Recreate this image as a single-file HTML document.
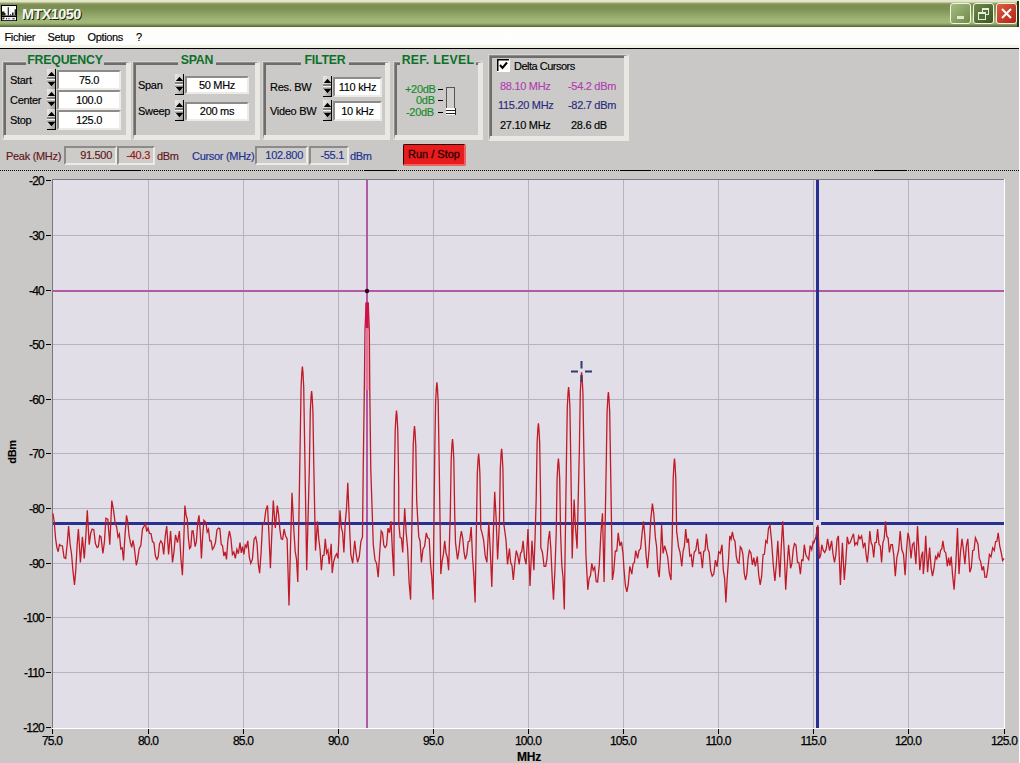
<!DOCTYPE html>
<html><head><meta charset="utf-8"><style>
html,body{margin:0;padding:0}
body{width:1020px;height:763px;overflow:hidden;position:relative;background:#c9c8c6;font-family:"Liberation Sans", sans-serif;font-size:11px;color:#000}
div,svg{position:absolute}
.frm{border-style:solid;border-width:3px 4px 4px 3px;border-color:#777 #ecebe6 #ecebe6 #777;background:#cbcac8;box-shadow:-1px -1px 0 #b0afad}
.gt{font-weight:bold;font-size:12.3px;color:#0b7028;background:#c9c8c6;height:11px;line-height:13px;text-align:center;letter-spacing:-0.2px}
.tb{background:#fff;border-style:solid;border-width:2px;border-color:#8c8b88 #ecebe6 #ecebe6 #8c8b88;font-size:11px;white-space:nowrap;letter-spacing:-0.3px;-webkit-text-stroke:0.15px currentColor}
.lb{white-space:nowrap;line-height:12px;letter-spacing:-0.3px;-webkit-text-stroke:0.15px currentColor}
.sp{}
</style></head><body>

<div style="left:0;top:0;width:1019px;height:27px;background:linear-gradient(#e6e8cc 0px,#e0e4c4 2px,#9aa672 3px,#7b8d52 5px,#7f9256 9px,#8ea266 14px,#9db474 19px,#a2b87a 23px,#7d9256 25px,#4e5e34 27px)"></div>
<div style="left:1017px;top:1px;width:2px;height:26px;background:#2c3418"></div>
<div style="left:1019px;top:0;width:1px;height:763px;background:#fff"></div>
<svg style="left:1px;top:5px" width="16" height="16" viewBox="0 0 16 16">
<rect x="0" y="0" width="16" height="16" fill="#000"/>
<rect x="1" y="1" width="14" height="9.5" fill="#fff"/>
<path d="M1,10.5 V6.5 H3.5 V8 H4.5 V10.5 Z M6.7,10.5 V2.2 H7.9 V10.5 Z M9,10.5 V9.2 H10.2 V10.5 Z M11,10.5 V7.4 H12.6 V10.5 Z M13.6,10.5 V4.3 H15 V10.5 Z" fill="#1a2418"/>
<rect x="1" y="12" width="14" height="3.2" fill="#f2f0f4"/>
<path d="M2,14.6 V13 H3.5 M5,13.8 H6 M7.5,13.8 H8.5 M11.5,13.8 H13.5" stroke="#000" stroke-width="1.1" fill="none"/>
</svg>
<div style="left:22px;top:6px;font-size:14.5px;font-weight:bold;color:#f4f8ec;letter-spacing:-0.6px;line-height:17px;text-shadow:1px 1px 0 #1a220e;transform:skewX(-3deg)">MTX1050</div>
<div style="left:950px;top:3px;width:19px;height:19px;border:1px solid #f2f4e0;border-radius:3px;background:linear-gradient(135deg,#a6bc82,#6e8a4a)"><div style="left:6px;top:12px;width:7px;height:3px;background:#dfe8c8"></div></div>
<div style="left:973px;top:3px;width:19px;height:19px;border:1px solid #f2f4e0;border-radius:3px;background:linear-gradient(135deg,#6f8a4c,#3c5424)"><div style="left:8px;top:4px;width:5px;height:4px;border:1px solid #e6eed6;border-top-width:2px"></div><div style="left:4px;top:8px;width:6px;height:5px;border:1px solid #e6eed6;border-top-width:2px;background:#556e38"></div></div>
<div style="left:996px;top:3px;width:19px;height:19px;border:1px solid #f2f4e0;border-radius:3px;background:linear-gradient(135deg,#e05a40,#b02418)"><svg style="left:3px;top:3px" width="13" height="13"><path d="M2,2 L11,11 M11,2 L2,11" stroke="#fff" stroke-width="2"/></svg></div>
<div style="left:0;top:27px;width:1019px;height:21px;background:linear-gradient(#fdfdfb 0,#fefefc 17px,#f2f1e6 19px,#f4f3ea 21px)"></div>
<div style="left:0;top:48px;width:1019px;height:1px;background:#000"></div>
<div class="lb" style="left:4.5px;top:31px;font-size:11px;line-height:12px;letter-spacing:-0.35px">Fichier</div>
<div class="lb" style="left:47.5px;top:31px;font-size:11px;line-height:12px;letter-spacing:-0.35px">Setup</div>
<div class="lb" style="left:87.5px;top:31px;font-size:11px;line-height:12px;letter-spacing:-0.35px">Options</div>
<div class="lb" style="left:136px;top:31px;font-size:11px;line-height:12px;letter-spacing:-0.35px">?</div>
<div style="left:2px;top:61px;width:128px;height:78px;border-style:solid;border-width:1px 0 0 1px;border-color:#d6d5d2;"></div><div style="left:3px;top:62px;width:122px;height:72px;border-style:solid;border-width:1px 5px 5px 1px;border-color:#8e8d8a #e9e8e3 #e9e8e3 #8e8d8a;background:#cbcac8"></div><div style="left:4px;top:63px;width:120px;height:70px;border-style:solid;border-width:2px 0 0 2px;border-color:#6e6d6b;background:#cbcac8"></div>
<div style="left:132px;top:61px;width:127px;height:78px;border-style:solid;border-width:1px 0 0 1px;border-color:#d6d5d2;"></div><div style="left:133px;top:62px;width:121px;height:72px;border-style:solid;border-width:1px 5px 5px 1px;border-color:#8e8d8a #e9e8e3 #e9e8e3 #8e8d8a;background:#cbcac8"></div><div style="left:134px;top:63px;width:119px;height:70px;border-style:solid;border-width:2px 0 0 2px;border-color:#6e6d6b;background:#cbcac8"></div>
<div style="left:262px;top:61px;width:127px;height:78px;border-style:solid;border-width:1px 0 0 1px;border-color:#d6d5d2;"></div><div style="left:263px;top:62px;width:121px;height:72px;border-style:solid;border-width:1px 5px 5px 1px;border-color:#8e8d8a #e9e8e3 #e9e8e3 #8e8d8a;background:#cbcac8"></div><div style="left:264px;top:63px;width:119px;height:70px;border-style:solid;border-width:2px 0 0 2px;border-color:#6e6d6b;background:#cbcac8"></div>
<div style="left:393px;top:61px;width:89px;height:78px;border-style:solid;border-width:1px 0 0 1px;border-color:#d6d5d2;"></div><div style="left:394px;top:62px;width:83px;height:72px;border-style:solid;border-width:1px 5px 5px 1px;border-color:#8e8d8a #e9e8e3 #e9e8e3 #8e8d8a;background:#cbcac8"></div><div style="left:395px;top:63px;width:81px;height:70px;border-style:solid;border-width:2px 0 0 2px;border-color:#6e6d6b;background:#cbcac8"></div>
<div style="left:488px;top:54px;width:140px;height:86px;border-style:solid;border-width:1px 0 0 1px;border-color:#d6d5d2;"></div><div style="left:489px;top:55px;width:134px;height:80px;border-style:solid;border-width:1px 5px 5px 1px;border-color:#8e8d8a #e9e8e3 #e9e8e3 #8e8d8a;background:#cbcac8"></div><div style="left:490px;top:56px;width:132px;height:78px;border-style:solid;border-width:2px 0 0 2px;border-color:#6e6d6b;background:#cbcac8"></div>
<div class="gt" style="left:26px;top:54px;width:78px">FREQUENCY</div>
<div class="gt" style="left:178px;top:54px;width:38px">SPAN</div>
<div class="gt" style="left:301px;top:54px;width:48px">FILTER</div>
<div class="gt" style="left:400px;top:54px;width:76px;letter-spacing:0.3px">REF. LEVEL</div>
<div class="lb" style="left:10px;top:74px;color:#000;font-size:11px;">Start</div>
<svg class="sp" style="left:47px;top:69px" width="9" height="21" viewBox="0 0 9 21">
<defs><linearGradient id="sg47_69" x1="0" y1="0" x2="1" y2="1"><stop offset="0" stop-color="#ecebe8"/><stop offset="0.55" stop-color="#c8c7c4"/><stop offset="1" stop-color="#8c8b88"/></linearGradient></defs>
<rect x="0" y="0" width="9" height="21" fill="url(#sg47_69)"/>
<path d="M0.8,7 L4.5,2.8 L8.2,7 Z" fill="#000"/>
<rect x="0" y="8.6" width="8" height="1.1" fill="#111"/>
<rect x="0" y="9.7" width="8" height="2" fill="#f6f6f2"/>
<rect x="0" y="11.7" width="8" height="0.8" fill="#555"/>
<path d="M0.8,13 L4.5,17.2 L8.2,13 Z" fill="#000"/>
<rect x="0" y="20" width="9" height="1" fill="#000"/>
<rect x="8" y="0" width="1" height="21" fill="#000"/>
</svg>
<div class="tb" style="left:57px;top:70px;width:60px;height:16px;line-height:16px;text-align:center;padding-right:0px;">75.0</div>
<div class="lb" style="left:10px;top:94px;color:#000;font-size:11px;">Center</div>
<svg class="sp" style="left:47px;top:89px" width="9" height="21" viewBox="0 0 9 21">
<defs><linearGradient id="sg47_89" x1="0" y1="0" x2="1" y2="1"><stop offset="0" stop-color="#ecebe8"/><stop offset="0.55" stop-color="#c8c7c4"/><stop offset="1" stop-color="#8c8b88"/></linearGradient></defs>
<rect x="0" y="0" width="9" height="21" fill="url(#sg47_89)"/>
<path d="M0.8,7 L4.5,2.8 L8.2,7 Z" fill="#000"/>
<rect x="0" y="8.6" width="8" height="1.1" fill="#111"/>
<rect x="0" y="9.7" width="8" height="2" fill="#f6f6f2"/>
<rect x="0" y="11.7" width="8" height="0.8" fill="#555"/>
<path d="M0.8,13 L4.5,17.2 L8.2,13 Z" fill="#000"/>
<rect x="0" y="20" width="9" height="1" fill="#000"/>
<rect x="8" y="0" width="1" height="21" fill="#000"/>
</svg>
<div class="tb" style="left:57px;top:90px;width:60px;height:16px;line-height:16px;text-align:center;padding-right:0px;">100.0</div>
<div class="lb" style="left:10px;top:114px;color:#000;font-size:11px;">Stop</div>
<svg class="sp" style="left:47px;top:109px" width="9" height="21" viewBox="0 0 9 21">
<defs><linearGradient id="sg47_109" x1="0" y1="0" x2="1" y2="1"><stop offset="0" stop-color="#ecebe8"/><stop offset="0.55" stop-color="#c8c7c4"/><stop offset="1" stop-color="#8c8b88"/></linearGradient></defs>
<rect x="0" y="0" width="9" height="21" fill="url(#sg47_109)"/>
<path d="M0.8,7 L4.5,2.8 L8.2,7 Z" fill="#000"/>
<rect x="0" y="8.6" width="8" height="1.1" fill="#111"/>
<rect x="0" y="9.7" width="8" height="2" fill="#f6f6f2"/>
<rect x="0" y="11.7" width="8" height="0.8" fill="#555"/>
<path d="M0.8,13 L4.5,17.2 L8.2,13 Z" fill="#000"/>
<rect x="0" y="20" width="9" height="1" fill="#000"/>
<rect x="8" y="0" width="1" height="21" fill="#000"/>
</svg>
<div class="tb" style="left:57px;top:110px;width:60px;height:16px;line-height:16px;text-align:center;padding-right:0px;">125.0</div>
<div class="lb" style="left:138px;top:79px;color:#000;font-size:11px;">Span</div>
<svg class="sp" style="left:175px;top:74px" width="9" height="21" viewBox="0 0 9 21">
<defs><linearGradient id="sg175_74" x1="0" y1="0" x2="1" y2="1"><stop offset="0" stop-color="#ecebe8"/><stop offset="0.55" stop-color="#c8c7c4"/><stop offset="1" stop-color="#8c8b88"/></linearGradient></defs>
<rect x="0" y="0" width="9" height="21" fill="url(#sg175_74)"/>
<path d="M0.8,7 L4.5,2.8 L8.2,7 Z" fill="#000"/>
<rect x="0" y="8.6" width="8" height="1.1" fill="#111"/>
<rect x="0" y="9.7" width="8" height="2" fill="#f6f6f2"/>
<rect x="0" y="11.7" width="8" height="0.8" fill="#555"/>
<path d="M0.8,13 L4.5,17.2 L8.2,13 Z" fill="#000"/>
<rect x="0" y="20" width="9" height="1" fill="#000"/>
<rect x="8" y="0" width="1" height="21" fill="#000"/>
</svg>
<div class="tb" style="left:185px;top:76px;width:60px;height:14px;line-height:14px;text-align:center;padding-right:0px;">50 MHz</div>
<div class="lb" style="left:138px;top:105px;color:#000;font-size:11px;">Sweep</div>
<svg class="sp" style="left:175px;top:100px" width="9" height="21" viewBox="0 0 9 21">
<defs><linearGradient id="sg175_100" x1="0" y1="0" x2="1" y2="1"><stop offset="0" stop-color="#ecebe8"/><stop offset="0.55" stop-color="#c8c7c4"/><stop offset="1" stop-color="#8c8b88"/></linearGradient></defs>
<rect x="0" y="0" width="9" height="21" fill="url(#sg175_100)"/>
<path d="M0.8,7 L4.5,2.8 L8.2,7 Z" fill="#000"/>
<rect x="0" y="8.6" width="8" height="1.1" fill="#111"/>
<rect x="0" y="9.7" width="8" height="2" fill="#f6f6f2"/>
<rect x="0" y="11.7" width="8" height="0.8" fill="#555"/>
<path d="M0.8,13 L4.5,17.2 L8.2,13 Z" fill="#000"/>
<rect x="0" y="20" width="9" height="1" fill="#000"/>
<rect x="8" y="0" width="1" height="21" fill="#000"/>
</svg>
<div class="tb" style="left:185px;top:102px;width:60px;height:15px;line-height:15px;text-align:center;padding-right:0px;">200 ms</div>
<div class="lb" style="left:270px;top:81px;color:#000;font-size:11px;">Res. BW</div>
<svg class="sp" style="left:323px;top:76px" width="9" height="21" viewBox="0 0 9 21">
<defs><linearGradient id="sg323_76" x1="0" y1="0" x2="1" y2="1"><stop offset="0" stop-color="#ecebe8"/><stop offset="0.55" stop-color="#c8c7c4"/><stop offset="1" stop-color="#8c8b88"/></linearGradient></defs>
<rect x="0" y="0" width="9" height="21" fill="url(#sg323_76)"/>
<path d="M0.8,7 L4.5,2.8 L8.2,7 Z" fill="#000"/>
<rect x="0" y="8.6" width="8" height="1.1" fill="#111"/>
<rect x="0" y="9.7" width="8" height="2" fill="#f6f6f2"/>
<rect x="0" y="11.7" width="8" height="0.8" fill="#555"/>
<path d="M0.8,13 L4.5,17.2 L8.2,13 Z" fill="#000"/>
<rect x="0" y="20" width="9" height="1" fill="#000"/>
<rect x="8" y="0" width="1" height="21" fill="#000"/>
</svg>
<div class="tb" style="left:333px;top:77px;width:45px;height:16px;line-height:16px;text-align:center;padding-right:0px;">110 kHz</div>
<div class="lb" style="left:270px;top:105px;color:#000;font-size:11px;">Video BW</div>
<svg class="sp" style="left:323px;top:100px" width="9" height="21" viewBox="0 0 9 21">
<defs><linearGradient id="sg323_100" x1="0" y1="0" x2="1" y2="1"><stop offset="0" stop-color="#ecebe8"/><stop offset="0.55" stop-color="#c8c7c4"/><stop offset="1" stop-color="#8c8b88"/></linearGradient></defs>
<rect x="0" y="0" width="9" height="21" fill="url(#sg323_100)"/>
<path d="M0.8,7 L4.5,2.8 L8.2,7 Z" fill="#000"/>
<rect x="0" y="8.6" width="8" height="1.1" fill="#111"/>
<rect x="0" y="9.7" width="8" height="2" fill="#f6f6f2"/>
<rect x="0" y="11.7" width="8" height="0.8" fill="#555"/>
<path d="M0.8,13 L4.5,17.2 L8.2,13 Z" fill="#000"/>
<rect x="0" y="20" width="9" height="1" fill="#000"/>
<rect x="8" y="0" width="1" height="21" fill="#000"/>
</svg>
<div class="tb" style="left:333px;top:101px;width:45px;height:16px;line-height:16px;text-align:center;padding-right:0px;">10 kHz</div>
<div class="lb" style="left:405px;top:83px;color:#158a28;font-size:11px;letter-spacing:-0.3px">+20dB</div>
<div class="lb" style="left:416px;top:94px;color:#158a28;font-size:11px;letter-spacing:-0.3px">0dB</div>
<div class="lb" style="left:406px;top:106px;color:#158a28;font-size:11px;letter-spacing:-0.3px">-20dB</div>
<svg style="left:437px;top:85px" width="22" height="32">
<path d="M1,4.5 H6 M1,15.5 H6 M1,27.5 H6" stroke="#000" stroke-width="1"/>
<rect x="9.5" y="2.5" width="8" height="21" fill="#d0cfcc" stroke="#555" stroke-width="1"/>
<rect x="9" y="23" width="10" height="7" fill="#fff"/>
<path d="M9,25.5 H18 M9,28.5 H18 M18.5,23 V30" stroke="#222" stroke-width="1"/>
</svg>
<svg style="left:497px;top:59px" width="13" height="13">
<rect x="0" y="0" width="13" height="13" fill="#fff"/>
<path d="M0.5,12 V0.5 H12" stroke="#000" stroke-width="2" fill="none"/>
<path d="M3,6 L5.5,9 L10,3.5" stroke="#000" stroke-width="2" fill="none"/>
</svg>
<div class="lb" style="left:514px;top:60px;color:#000;font-size:11px;letter-spacing:-0.5px">Delta Cursors</div>
<div class="lb" style="left:500px;top:80px;color:#b040b0;font-size:11px;">88.10 MHz</div>
<div class="lb" style="left:568px;top:80px;color:#b040b0;font-size:11px;">-54.2 dBm</div>
<div class="lb" style="left:498px;top:99px;color:#2a2a80;font-size:11px;">115.20 MHz</div>
<div class="lb" style="left:568px;top:99px;color:#2a2a80;font-size:11px;">-82.7 dBm</div>
<div class="lb" style="left:500px;top:119px;color:#000;font-size:11px;">27.10 MHz</div>
<div class="lb" style="left:571px;top:119px;color:#000;font-size:11px;">28.6 dB</div>
<div class="lb" style="left:6px;top:150px;color:#621616;font-size:11px;">Peak (MHz)</div>
<div class="tb" style="left:64px;top:146px;width:49px;height:15px;background:#cdccc9;color:#621616;text-align:right;line-height:15px"><span style="position:relative;right:3px">91.500</span></div>
<div class="tb" style="left:117px;top:146px;width:34px;height:15px;background:#cdccc9;color:#9a1414;text-align:right;line-height:15px"><span style="position:relative;right:3px">-40.3</span></div>
<div class="lb" style="left:157px;top:150px;color:#621616;font-size:11px;">dBm</div>
<div class="lb" style="left:192px;top:150px;color:#1a3090;font-size:11px;">Cursor (MHz)</div>
<div class="tb" style="left:255px;top:146px;width:49px;height:15px;background:#cdccc9;color:#1a3090;text-align:right;line-height:15px"><span style="position:relative;right:3px">102.800</span></div>
<div class="tb" style="left:309px;top:146px;width:36px;height:15px;background:#cdccc9;color:#1a3090;text-align:right;line-height:15px"><span style="position:relative;right:3px">-55.1</span></div>
<div class="lb" style="left:350px;top:150px;color:#1a3090;font-size:11px;">dBm</div>
<div style="left:403px;top:144px;width:60px;height:19px;background:#e81c1c;border-style:solid;border-width:1px 2px 2px 1px;border-color:#300 #f06060 #f06060 #300;border-radius:2px;font-size:11px;line-height:19px;text-align:center;color:#2a0000;font-weight:normal;-webkit-text-stroke:0.3px #2a0000">Run / Stop</div>
<div style="left:0;top:170px;width:1019px;height:1px;background:repeating-linear-gradient(90deg,#000 0 1px,transparent 1px 2px)"></div>
<div style="left:110px;top:170px;width:31px;height:1px;background:#000"></div>
<div style="left:365px;top:170px;width:31px;height:1px;background:#000"></div>
<div style="left:620px;top:170px;width:31px;height:1px;background:#000"></div>
<div style="left:875px;top:170px;width:31px;height:1px;background:#000"></div>
<svg style="left:0;top:0" width="1020" height="763" viewBox="0 0 1020 763">
<rect x="52" y="179" width="953" height="550" fill="#fff"/>
<rect x="52" y="179" width="952" height="549" fill="#7a7880"/>
<rect x="53" y="180" width="951" height="548" fill="#e1dee7"/>
<path d="M148.5,180V728 M243.5,180V728 M338.5,180V728 M433.5,180V728 M528.5,180V728 M623.5,180V728 M718.5,180V728 M813.5,180V728 M908.5,180V728 M53,235.5H1004 M53,290.5H1004 M53,344.5H1004 M53,399.5H1004 M53,453.5H1004 M53,508.5H1004 M53,563.5H1004 M53,617.5H1004 M53,672.5H1004" stroke="#b6b2c0" stroke-width="1" fill="none"/>
<path d="M53,291H1004 M367,180V728" stroke="#b05aa6" stroke-width="2"/>
<path d="M53,523.5H813 M821,523.5H1004 M817.5,180V520 M817.5,527V728" stroke="#283090" stroke-width="3"/>
<path d="M52.9,513.3 54.2,521.7 55.6,538.5 56.9,547.6 58.2,551.7 59.5,544.5 60.8,545.7 62.4,545.8 64.1,557.5 65.7,558.4 67.2,544.0 68.6,526.1 70.1,544.3 71.6,554.5 73.0,571.4 74.5,584.9 75.8,569.9 77.1,545.8 78.4,529.0 80.4,562.4 82.4,536.9 84.3,558.4 85.8,536.4 87.3,510.4 89.2,544.7 90.7,533.2 92.2,529.0 93.8,529.6 95.4,543.6 97.1,547.6 98.4,546.7 99.7,535.8 101.0,536.9 102.9,553.5 104.4,542.1 105.9,518.2 107.8,519.2 109.8,544.7 111.8,500.6 113.7,511.4 115.2,523.6 116.7,527.1 118.0,537.2 119.4,534.0 120.8,548.8 122.2,547.9 123.5,560.4 125.0,534.9 126.5,515.3 127.8,522.2 129.1,535.7 130.4,542.7 131.7,547.4 133.0,540.4 134.3,547.6 136.3,565.3 137.7,559.4 139.2,548.6 140.8,545.5 142.5,528.9 144.1,526.1 145.4,523.4 146.7,531.6 148.0,528.0 149.5,533.5 151.0,533.6 152.5,541.6 153.9,542.7 155.4,556.0 156.9,559.4 158.2,556.8 159.5,543.9 160.8,540.8 162.3,543.2 163.7,554.5 165.2,536.5 166.7,526.1 168.6,554.5 170.6,531.0 172.5,562.4 174.0,551.6 175.5,534.9 177.5,542.7 179.4,531.0 180.9,558.5 182.4,575.1 183.6,545.3 184.9,505.5 186.1,515.1 187.3,519.2 188.4,538.3 189.6,548.6 190.8,546.9 192.0,531.0 193.1,531.0 195.1,546.7 196.4,541.4 197.7,522.8 199.0,515.3 200.2,530.5 201.4,558.4 202.6,537.2 203.9,520.2 205.9,522.2 207.2,532.0 208.5,529.3 209.8,540.8 211.1,540.8 212.4,549.3 213.7,547.6 215.4,542.8 217.0,529.7 218.6,528.0 219.9,528.6 221.2,544.2 222.5,545.7 223.9,556.1 225.2,551.8 226.5,559.4 227.9,540.2 229.4,531.0 230.9,538.3 232.4,554.5 233.8,552.1 235.3,558.4 236.9,549.4 238.4,553.7 240.0,542.7 241.3,552.9 242.6,546.7 243.9,554.5 245.2,545.1 246.5,547.2 247.8,540.8 249.3,557.1 250.8,563.3 252.4,559.2 254.1,539.2 255.7,536.9 257.0,543.3 258.3,564.0 259.6,573.1 261.1,552.5 262.5,525.1 264.2,523.4 265.8,510.4 267.5,505.5 268.9,533.1 270.4,568.2 271.9,532.1 273.3,500.6 275.3,528.0 277.3,505.5 278.6,514.5 279.9,529.5 281.2,538.8 282.6,539.3 284.1,529.0 285.6,536.1 287.1,538.8 289.0,605.5 290.5,546.4 292.0,492.7 293.9,531.0 295.2,551.4 296.5,559.1 297.8,582.0 300.2,441.5 301.1,386.5 301.9,371.5 302.4,366.5 302.9,371.5 303.7,386.5 304.6,441.5 306.7,570.2 309.4,466.0 310.3,411.0 311.1,396.0 311.6,391.0 312.1,396.0 312.9,411.0 313.8,466.0 315.5,550.6 317.5,521.2 318.8,539.4 320.1,550.1 321.4,570.2 322.7,555.5 324.0,555.2 325.3,538.8 326.6,552.9 327.9,550.0 329.2,564.3 331.2,543.7 332.2,573.1 333.6,561.9 335.1,556.5 336.6,553.9 338.0,558.4 340.0,510.4 341.3,527.7 342.6,532.6 343.9,552.5 345.2,523.1 346.5,508.4 347.8,482.9 349.3,521.1 350.8,554.5 352.7,563.3 354.7,540.8 356.2,554.2 357.6,562.4 359.3,556.5 360.9,541.4 362.5,536.9 363.2,470.0 364.3,392.0 365.0,330.0 366.2,303.0 368.2,303.0 369.3,330.0 369.8,392.0 370.8,470.0 373.3,544.7 375.0,559.9 376.6,563.5 378.2,577.1 379.7,552.5 381.2,531.0 382.5,532.9 383.8,545.4 385.1,547.6 386.6,545.4 388.0,528.1 389.5,532.7 391.0,521.2 392.5,552.7 393.9,576.1 394.3,485.6 395.2,430.6 396.0,415.6 396.5,410.6 397.0,415.6 397.8,430.6 398.7,485.6 398.8,523.1 400.1,537.5 401.4,537.9 402.7,552.5 404.7,508.4 406.2,533.0 407.6,548.0 409.1,582.2 410.6,599.6 412.3,501.0 413.2,446.0 414.0,431.0 414.5,426.0 415.0,431.0 415.8,446.0 416.7,501.0 417.5,515.3 418.8,536.9 420.1,541.2 421.4,562.4 423.0,549.1 424.6,546.2 426.3,532.9 427.7,537.9 429.2,538.8 430.5,563.8 431.8,577.5 433.1,599.6 434.7,457.2 435.6,402.2 436.4,387.2 436.9,382.2 437.4,387.2 438.2,402.2 439.1,457.2 440.8,574.1 442.1,561.2 443.4,554.4 444.7,540.8 446.0,552.9 447.3,557.2 448.6,570.2 450.3,514.0 451.2,459.0 452.0,444.0 452.5,439.0 453.0,444.0 453.8,459.0 454.7,514.0 455.5,542.7 457.5,559.4 458.8,551.7 460.1,539.0 461.4,531.0 462.7,538.2 464.0,551.9 465.3,559.4 466.8,554.6 468.2,541.6 469.7,541.0 471.2,527.1 472.5,556.8 473.8,575.1 475.1,602.5 476.4,528.7 477.3,473.7 478.1,458.7 478.6,453.7 479.1,458.7 479.9,473.7 480.8,528.7 482.0,532.9 483.6,540.0 485.2,555.8 486.9,562.4 488.8,522.2 490.3,551.2 491.8,586.9 493.2,537.2 494.7,491.8 496.2,519.8 497.6,559.4 499.4,523.8 500.3,468.8 501.1,453.8 501.6,448.8 502.1,453.8 502.9,468.8 503.8,523.8 504.5,529.0 506.0,540.2 507.5,564.3 509.4,548.6 510.7,562.9 512.0,565.6 513.3,580.0 514.8,563.4 516.3,550.6 517.7,555.4 519.2,564.3 520.5,553.3 521.8,551.5 523.1,540.8 524.6,558.2 526.1,564.3 528.0,529.0 530.0,585.9 532.0,540.8 533.9,570.2 535.1,536.6 536.2,498.3 537.1,443.3 537.9,428.3 538.4,423.3 538.9,428.3 539.7,443.3 540.6,498.3 540.8,547.6 542.4,552.2 544.1,566.3 545.7,566.3 547.0,558.7 548.3,540.5 549.6,531.0 550.9,549.6 552.2,578.4 553.5,599.6 554.9,570.7 556.2,533.6 557.1,478.6 557.9,463.6 558.4,458.6 558.9,463.6 559.7,478.6 560.6,533.6 561.8,565.3 563.1,578.3 564.3,609.4 566.4,462.0 567.3,407.0 568.1,392.0 568.6,387.0 569.1,392.0 569.9,407.0 570.8,462.0 572.2,558.4 574.1,499.6 575.6,529.1 577.1,548.6 579.4,447.4 580.3,392.4 581.1,377.4 581.6,372.4 582.1,377.4 582.9,392.4 583.8,447.4 585.9,554.5 587.8,589.8 589.2,578.2 590.5,575.5 591.8,563.3 593.2,570.3 594.7,567.3 596.2,581.5 597.6,582.0 599.3,564.5 600.9,533.1 602.5,513.3 604.1,582.0 606.2,467.0 607.1,412.0 607.9,397.0 608.4,392.0 608.9,397.0 609.7,412.0 610.6,467.0 612.4,580.0 613.8,570.9 615.3,550.9 616.8,551.1 618.2,532.9 619.9,545.9 621.5,541.8 623.1,554.5 623.9,568.2 625.4,585.6 626.9,591.8 628.3,584.2 629.8,566.3 631.8,574.1 633.1,563.6 634.4,562.5 635.7,550.6 637.6,558.4 639.1,550.3 640.6,548.6 642.1,533.3 643.5,521.2 644.8,535.2 646.1,555.4 647.5,568.2 649.1,549.5 650.7,520.1 652.4,503.5 653.8,513.9 655.3,536.9 656.6,546.5 657.9,569.8 659.2,577.1 660.4,557.5 661.6,525.1 663.1,553.5 664.6,545.8 666.1,550.6 667.7,557.1 669.3,572.8 671.0,580.0 672.3,533.6 673.2,478.6 674.0,463.6 674.5,458.6 675.0,463.6 675.8,478.6 676.7,533.6 676.9,532.9 678.5,546.7 680.1,552.7 681.8,566.3 683.1,551.3 684.4,546.1 685.7,529.0 687.1,542.7 688.4,538.6 689.8,555.9 691.2,554.8 692.5,567.3 694.2,552.3 695.8,550.2 697.5,538.8 699.1,553.4 700.7,552.4 702.4,568.2 703.7,551.4 705.0,550.6 706.3,533.9 707.7,548.4 709.2,552.6 710.7,571.0 712.2,576.1 713.8,574.0 715.4,560.1 717.1,566.8 718.7,551.7 720.3,553.4 722.0,544.7 723.3,570.2 724.6,578.1 725.9,602.5 727.2,578.0 728.5,560.2 729.8,535.9 731.1,539.1 732.4,531.8 733.7,538.8 735.0,541.1 736.3,556.7 737.6,562.4 739.0,563.4 740.3,546.8 741.6,548.6 742.9,554.3 744.2,572.8 745.5,580.0 746.8,574.4 748.1,558.2 749.4,550.6 750.9,552.9 752.4,564.8 753.8,557.6 755.3,566.3 757.3,556.5 758.7,574.8 760.2,584.9 761.7,575.9 763.1,554.5 764.4,554.3 765.8,540.8 767.1,542.7 768.5,528.3 770.0,525.1 771.6,541.2 773.3,565.1 774.9,581.0 776.4,563.8 777.8,540.8 779.8,577.1 781.3,546.4 782.7,521.2 784.2,551.1 785.7,589.8 787.2,564.5 788.6,544.7 790.6,568.2 791.9,563.7 793.2,549.7 794.5,543.7 796.0,545.3 797.5,562.2 798.9,562.7 800.4,574.1 801.7,559.9 803.0,560.5 804.3,544.7 805.8,554.7 807.3,557.5 808.7,559.6 810.2,545.6 811.7,549.8 813.1,541.8 813.9,542.7 815.9,536.9 817.8,525.1 819.4,558.4 820.6,555.7 821.8,544.7 823.2,550.2 824.7,552.5 826.2,549.4 827.6,538.8 829.6,550.6 831.6,540.8 833.0,554.0 834.5,562.4 835.8,555.0 837.1,539.2 838.4,535.9 840.4,584.9 842.4,542.7 844.3,580.0 845.8,560.8 847.3,536.9 848.7,543.7 850.2,542.7 852.2,536.9 853.5,533.7 854.8,545.1 856.1,542.7 857.4,544.6 858.7,536.0 860.0,538.8 861.6,535.9 863.3,546.9 864.9,542.7 866.1,554.6 867.3,562.4 868.5,551.0 869.8,531.0 871.1,542.5 872.4,545.7 873.7,557.5 875.0,542.6 876.3,542.5 877.6,529.0 879.0,544.4 880.3,545.9 881.6,562.4 882.9,542.6 884.2,538.6 885.5,521.2 886.8,536.2 888.1,538.1 889.4,552.5 890.9,544.6 892.4,544.7 893.8,555.4 895.3,576.1 896.9,557.3 898.6,550.2 900.2,531.0 901.8,549.6 903.5,554.2 905.1,575.1 906.6,549.0 908.0,532.9 909.5,539.8 911.0,558.4 912.5,544.4 913.9,542.7 915.9,564.3 917.5,526.1 918.6,545.3 919.8,570.2 921.3,556.6 922.7,551.6 923.3,574.1 924.5,561.2 925.7,535.9 927.6,572.2 929.6,547.6 931.1,567.6 932.5,576.1 934.0,568.5 935.5,556.5 936.8,558.9 938.1,553.4 939.4,557.5 940.6,550.0 941.8,549.0 942.9,540.8 944.4,551.1 945.8,552.9 947.3,566.3 948.6,557.6 949.9,565.7 951.2,556.5 952.6,575.4 954.1,589.8 955.8,564.0 957.5,528.0 959.0,574.1 960.5,551.7 962.0,538.8 963.4,549.4 964.9,564.3 966.4,545.7 967.8,538.8 969.8,572.2 971.3,567.7 972.7,550.6 974.1,549.9 975.4,537.8 976.7,540.8 978.0,544.2 979.3,558.4 980.6,561.4 982.1,570.3 983.5,566.3 985.0,577.3 986.5,577.1 987.9,568.1 989.4,554.5 991.0,556.9 992.7,547.8 994.3,550.6 995.6,541.5 996.9,541.3 998.2,532.9 999.7,545.8 1001.2,552.5 1002.6,560.6 1004.1,558.4" stroke="#c01a26" stroke-width="1.3" fill="none" stroke-linejoin="miter"/>
<rect x="365.5" y="303" width="3.2" height="27" fill="#d0104c"/><rect x="365.6" y="328" width="3" height="62" fill="#dc7aa4"/>
<circle cx="367" cy="291" r="2.2" fill="#300010"/>
<path d="M571,371.5H578 M585,371.5H592 M581.5,361V368.5 M581.5,375V382" stroke="#303a70" stroke-width="2"/>
<path d="M46,180.5H51 M46,235.5H51 M46,290.5H51 M46,344.5H51 M46,399.5H51 M46,453.5H51 M46,508.5H51 M46,563.5H51 M46,617.5H51 M46,672.5H51 M46,727.5H51 M52.5,729V734 M148.5,729V734 M243.5,729V734 M338.5,729V734 M433.5,729V734 M528.5,729V734 M623.5,729V734 M718.5,729V734 M813.5,729V734 M908.5,729V734 M1004.5,729V734" stroke="#000" stroke-width="1"/>
</svg>
<div class="lb" style="left:0px;top:175px;width:44px;text-align:right;font-size:12px;letter-spacing:-0.8px;-webkit-text-stroke:0.25px #000">-20</div>
<div class="lb" style="left:0px;top:230px;width:44px;text-align:right;font-size:12px;letter-spacing:-0.8px;-webkit-text-stroke:0.25px #000">-30</div>
<div class="lb" style="left:0px;top:285px;width:44px;text-align:right;font-size:12px;letter-spacing:-0.8px;-webkit-text-stroke:0.25px #000">-40</div>
<div class="lb" style="left:0px;top:339px;width:44px;text-align:right;font-size:12px;letter-spacing:-0.8px;-webkit-text-stroke:0.25px #000">-50</div>
<div class="lb" style="left:0px;top:394px;width:44px;text-align:right;font-size:12px;letter-spacing:-0.8px;-webkit-text-stroke:0.25px #000">-60</div>
<div class="lb" style="left:0px;top:448px;width:44px;text-align:right;font-size:12px;letter-spacing:-0.8px;-webkit-text-stroke:0.25px #000">-70</div>
<div class="lb" style="left:0px;top:503px;width:44px;text-align:right;font-size:12px;letter-spacing:-0.8px;-webkit-text-stroke:0.25px #000">-80</div>
<div class="lb" style="left:0px;top:558px;width:44px;text-align:right;font-size:12px;letter-spacing:-0.8px;-webkit-text-stroke:0.25px #000">-90</div>
<div class="lb" style="left:0px;top:612px;width:44px;text-align:right;font-size:12px;letter-spacing:-0.8px;-webkit-text-stroke:0.25px #000">-100</div>
<div class="lb" style="left:0px;top:667px;width:44px;text-align:right;font-size:12px;letter-spacing:-0.8px;-webkit-text-stroke:0.25px #000">-110</div>
<div class="lb" style="left:0px;top:722px;width:44px;text-align:right;font-size:12px;letter-spacing:-0.8px;-webkit-text-stroke:0.25px #000">-120</div>
<div class="lb" style="left:22px;top:735px;width:60px;text-align:center;font-size:12px;letter-spacing:-0.8px;-webkit-text-stroke:0.25px #000">75.0</div>
<div class="lb" style="left:118px;top:735px;width:60px;text-align:center;font-size:12px;letter-spacing:-0.8px;-webkit-text-stroke:0.25px #000">80.0</div>
<div class="lb" style="left:213px;top:735px;width:60px;text-align:center;font-size:12px;letter-spacing:-0.8px;-webkit-text-stroke:0.25px #000">85.0</div>
<div class="lb" style="left:308px;top:735px;width:60px;text-align:center;font-size:12px;letter-spacing:-0.8px;-webkit-text-stroke:0.25px #000">90.0</div>
<div class="lb" style="left:403px;top:735px;width:60px;text-align:center;font-size:12px;letter-spacing:-0.8px;-webkit-text-stroke:0.25px #000">95.0</div>
<div class="lb" style="left:498px;top:735px;width:60px;text-align:center;font-size:12px;letter-spacing:-0.8px;-webkit-text-stroke:0.25px #000">100.0</div>
<div class="lb" style="left:593px;top:735px;width:60px;text-align:center;font-size:12px;letter-spacing:-0.8px;-webkit-text-stroke:0.25px #000">105.0</div>
<div class="lb" style="left:688px;top:735px;width:60px;text-align:center;font-size:12px;letter-spacing:-0.8px;-webkit-text-stroke:0.25px #000">110.0</div>
<div class="lb" style="left:783px;top:735px;width:60px;text-align:center;font-size:12px;letter-spacing:-0.8px;-webkit-text-stroke:0.25px #000">115.0</div>
<div class="lb" style="left:878px;top:735px;width:60px;text-align:center;font-size:12px;letter-spacing:-0.8px;-webkit-text-stroke:0.25px #000">120.0</div>
<div class="lb" style="left:974px;top:735px;width:60px;text-align:center;font-size:12px;letter-spacing:-0.8px;-webkit-text-stroke:0.25px #000">125.0</div>
<div class="lb" style="left:509px;top:751px;width:40px;text-align:center;font-size:12px;font-weight:bold">MHz</div>
<div class="lb" style="left:-3px;top:446px;width:30px;text-align:center;font-size:11px;font-weight:bold;transform:rotate(-90deg)">dBm</div>
</body></html>
